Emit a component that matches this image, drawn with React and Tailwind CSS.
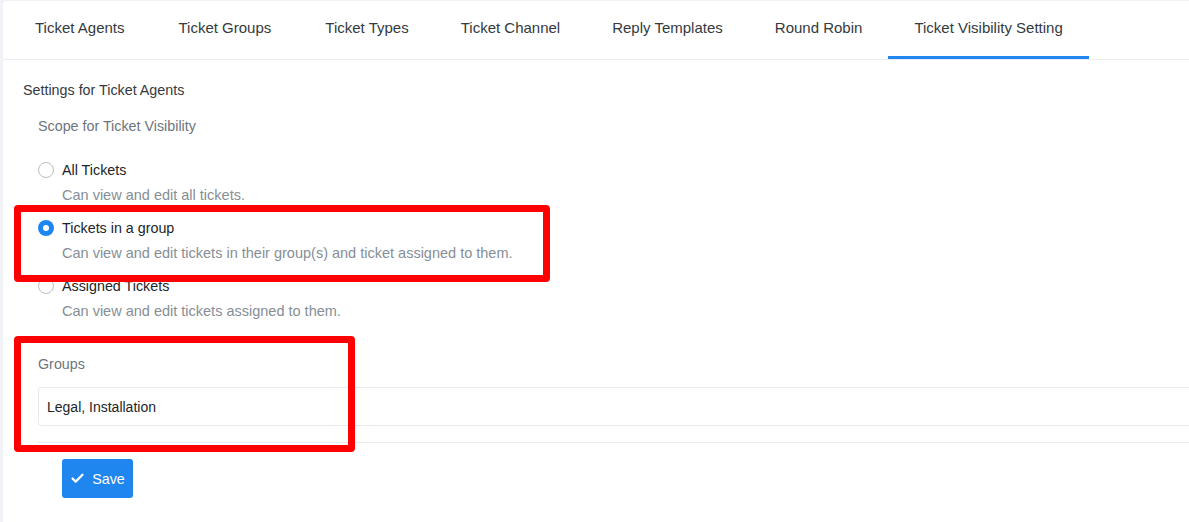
import { Check } from "lucide-react";

const tabs = [
  "Ticket Agents",
  "Ticket Groups",
  "Ticket Types",
  "Ticket Channel",
  "Reply Templates",
  "Round Robin",
  "Ticket Visibility Setting",
];

const options = [
  { label: "All Tickets", desc: "Can view and edit all tickets.", checked: false },
  {
    label: "Tickets in a group",
    desc: "Can view and edit tickets in their group(s) and ticket assigned to them.",
    checked: true,
  },
  { label: "Assigned Tickets", desc: "Can view and edit tickets assigned to them.", checked: false },
];

function Radio({ checked }) {
  if (checked) {
    return (
      <span className="w-4 h-4 rounded-full bg-[#1f86f0] flex items-center justify-center shrink-0">
        <span className="w-[6px] h-[6px] rounded-full bg-white" />
      </span>
    );
  }
  return <span className="w-4 h-4 rounded-full border border-[#b8bec4] bg-white shrink-0" />;
}

export default function App() {
  return (
    <div
      className="relative h-[522px] w-[1189px] overflow-hidden bg-[#f0f2f5] pl-[3px] pt-[1px]"
      style={{ fontFamily: '"Liberation Sans", Arial, sans-serif' }}
    >
      <div className="h-full bg-white rounded-tl-[4px]">
        {/* TABS */}
        <div className="flex h-[59px] pl-[6px] border-b border-[#e8ebef]">
          {tabs.map((t, i) => (
            <div
              key={t}
              className={
                i === tabs.length - 1
                  ? "flex items-center px-[26px] text-[15px] text-[#343a40] border-b-[3px] border-[#2188f2]"
                  : i < 2
                  ? "flex items-center px-[26px] pr-[28px] text-[15px] text-[#343a40] border-b-[3px] border-transparent"
                  : "flex items-center px-[26px] text-[15px] text-[#343a40] border-b-[3px] border-transparent"
              }
            >
              {t}
            </div>
          ))}
        </div>

        {/* CONTENT */}
        <div className="pl-[20px] pt-[20px] text-[14.3px] leading-[20px]">
          <div className="text-[#343a40]">Settings for Ticket Agents</div>

          <div className="pl-[15px]">
            <div className="mt-[16px] text-[#6c757d]">Scope for Ticket Visibility</div>

            <div className="mt-[24px] flex flex-col gap-[13px]">
              {options.map((o) => (
                <div key={o.label}>
                  <div className="flex items-center gap-2">
                    <Radio checked={o.checked} />
                    <span className="text-[#212529]">{o.label}</span>
                  </div>
                  <div className="mt-[5px] pl-[24px] text-[14.5px] text-[#868e96]">{o.desc}</div>
                </div>
              ))}
            </div>

            <div className="mt-[33px] text-[#6c757d]">Groups</div>
            <div className="mt-[13px] h-[39px] -mr-2 flex items-center px-[8px] border border-[#e6e9ed] rounded-[3px] text-[14px] text-[#212529]">
              Legal, Installation
            </div>
            <div className="mt-[16px] border-t border-[#e6e9ed]" />

            <div className="mt-[16px] pl-[24px]">
              <button className="h-[39px] w-[71px] flex items-center justify-center gap-[7px] rounded-[3px] bg-[#1f86f0] text-white">
                <Check size={15} strokeWidth={3.5} />
                <span>Save</span>
              </button>
            </div>
          </div>
        </div>
      </div>

      {/* ANNOTATIONS */}
      <div className="absolute left-[14px] top-[205px] w-[536px] h-[77px] border-[7px] border-[#ff0000] rounded-[4px]" />
      <div className="absolute left-[14px] top-[336px] w-[341px] h-[116px] border-[7px] border-[#ff0000] rounded-[4px]" />
    </div>
  );
}
